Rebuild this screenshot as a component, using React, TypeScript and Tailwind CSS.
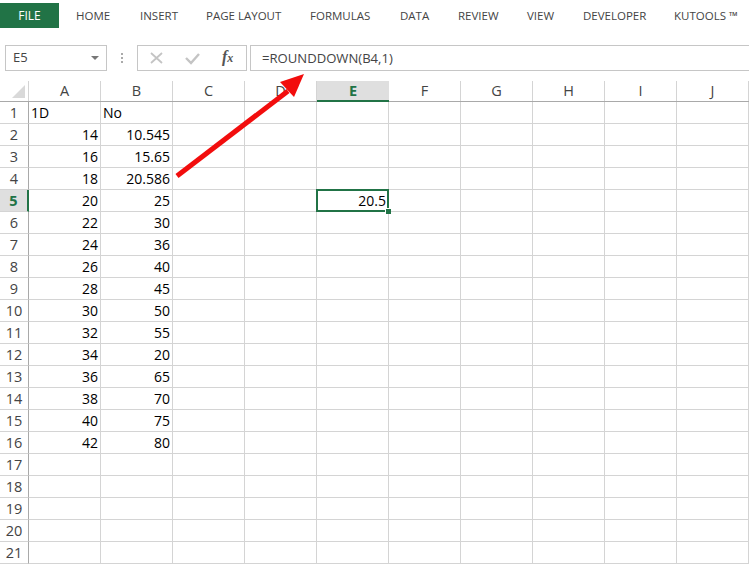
const tabs = [
  { label: "HOME", className: "w-[35px] ml-[17px]" },
  { label: "INSERT", className: "w-[36px] ml-[29px]" },
  { label: "PAGE LAYOUT", className: "w-[75px] ml-[30px]" },
  { label: "FORMULAS", className: "w-[61px] ml-[29px]" },
  { label: "DATA", className: "w-[29px] ml-[29px]" },
  { label: "REVIEW", className: "w-[40px] ml-[29px]" },
  { label: "VIEW", className: "w-[27px] ml-[29px]" },
  { label: "DEVELOPER", className: "w-[62px] ml-[29px]" },
  { label: "KUTOOLS ™", className: "w-[64px] ml-[29px]" },
];

const columns = ["A", "B", "C", "D", "E", "F", "G", "H", "I", "J"];

const data: [string, string][] = [
  ["1D", "No"],
  ["14", "10.545"],
  ["16", "15.65"],
  ["18", "20.586"],
  ["20", "25"],
  ["22", "30"],
  ["24", "36"],
  ["26", "40"],
  ["28", "45"],
  ["30", "50"],
  ["32", "55"],
  ["34", "20"],
  ["36", "65"],
  ["38", "70"],
  ["40", "75"],
  ["42", "80"],
];

const rows = Array.from({ length: 21 }, (_, i) => i + 1);

function Arrow() {
  return (
    <svg className="absolute left-0 top-0 pointer-events-none" width="749" height="564">
      <line x1="177" y1="176" x2="288" y2="91" stroke="#f20d0d" strokeWidth="5" />
      <polygon points="304,74 280,82 294,97" fill="#f20d0d" />
    </svg>
  );
}

function Cell({ children, left }: { children?: React.ReactNode; left?: boolean }) {
  return (
    <div
      className={`w-[72px] h-[22px] shrink-0 border-r border-b border-[#d4d4d4] text-[14px] leading-[22px] text-black pl-[2px] pr-[2px] ${
        left ? "text-left" : "text-right"
      }`}
    >
      {children}
    </div>
  );
}

export default function App() {
  return (
    <div className="relative w-[749px] h-[564px] overflow-hidden bg-white font-['Open_Sans',sans-serif]">
      <div className="flex items-start h-[45px] pt-[3px]">
        <div className="w-[59px] h-[25px] bg-[#217346] text-white text-[12px] leading-[25px] text-center">FILE</div>
        {tabs.map((t) => (
          <div key={t.label} className={`${t.className} shrink-0 whitespace-nowrap text-[11.5px] leading-[25px] text-[#444]`}>
            {t.label}
          </div>
        ))}
      </div>

      <div className="flex h-[26px] items-stretch">
        <div className="ml-[5px] w-[102px] flex items-center justify-between border border-[#c6c6c6] pl-[7px] pr-[7px] text-[13px] text-[#444]">
          <span>E5</span>
          <span className="w-0 h-0 border-x-[4px] border-x-transparent border-t-[4px] border-t-[#777]" />
        </div>
        <div className="w-[30px] flex flex-col items-center justify-center gap-[2px]">
          <span className="w-[2px] h-[2px] bg-[#aaa]" />
          <span className="w-[2px] h-[2px] bg-[#aaa]" />
          <span className="w-[2px] h-[2px] bg-[#aaa]" />
        </div>
        <div className="relative w-[110px] flex items-center border border-[#c6c6c6]">
          <svg width="108" height="24" viewBox="0 0 108 24">
            <path d="M13 7 L24 17 M24 7 L13 17" stroke="#c4c4c4" strokeWidth="1.8" fill="none" />
            <path d="M48 12 L53 17 L61 8" stroke="#c4c4c4" strokeWidth="2.4" fill="none" />
          </svg>
          <div className="absolute left-[84px] top-[1px] italic font-['Liberation_Serif',serif] text-[16px] leading-[20px] text-[#555] font-bold">
            f<span className="text-[12px]">x</span>
          </div>
        </div>
        <div className="ml-[3px] flex-1 border-y border-l border-[#c6c6c6] pl-[11px] text-[13.1px] leading-[24px] text-[#444]">
          =ROUNDDOWN(B4,1)
        </div>
      </div>

      <div className="flex mt-[10px] h-[21px] border-b border-[#a9a9a9]">
        <div className="w-[29px] shrink-0 border-r border-[#d4d4d4] flex items-end justify-end pr-[3px] pb-[3px]">
          <span className="w-0 h-0 border-l-[13px] border-l-transparent border-b-[13px] border-b-[#d9d9d9]" />
        </div>
        {columns.map((c) => (
          <div
            key={c}
            className={`w-[72px] shrink-0 text-center text-[14.5px] leading-[20px] ${
              c === "E"
                ? "bg-[#dfdfdf] font-bold text-[#217346] border-b-2 border-[#217346] h-[21px]"
                : "text-[#444] border-r border-[#d4d4d4]"
            }`}
          >
            {c}
          </div>
        ))}
      </div>

      {rows.map((r) => (
        <div key={r} className="flex">
          <div
            className={`w-[29px] h-[22px] shrink-0 border-b border-r border-b-[#d4d4d4] text-center text-[14.5px] leading-[22px] ${
              r === 5
                ? "bg-[#dfdfdf] font-bold text-[#217346] border-r-2 border-r-[#217346]"
                : "text-[#444] border-r-[#a9a9a9]"
            }`}
          >
            {r}
          </div>
          <Cell left={r === 1}>{data[r - 1]?.[0]}</Cell>
          <Cell left={r === 1}>{data[r - 1]?.[1]}</Cell>
          <Cell />
          <Cell />
          {r === 5 ? (
            <div className="relative w-[72px] h-[22px] shrink-0 border-r border-b border-[#d4d4d4] text-right text-[14px] leading-[22px] text-black pr-[2px]">
              20.5
              <div className="absolute -left-px -top-px w-[73px] h-[23px] border-2 border-[#217346]" />
              <div className="absolute right-[-3px] bottom-[-3px] w-[6px] h-[6px] bg-[#217346] border-l border-t border-white" />
            </div>
          ) : (
            <Cell />
          )}
          <Cell />
          <Cell />
          <Cell />
          <Cell />
          <Cell />
        </div>
      ))}
      <Arrow />
    </div>
  );
}
